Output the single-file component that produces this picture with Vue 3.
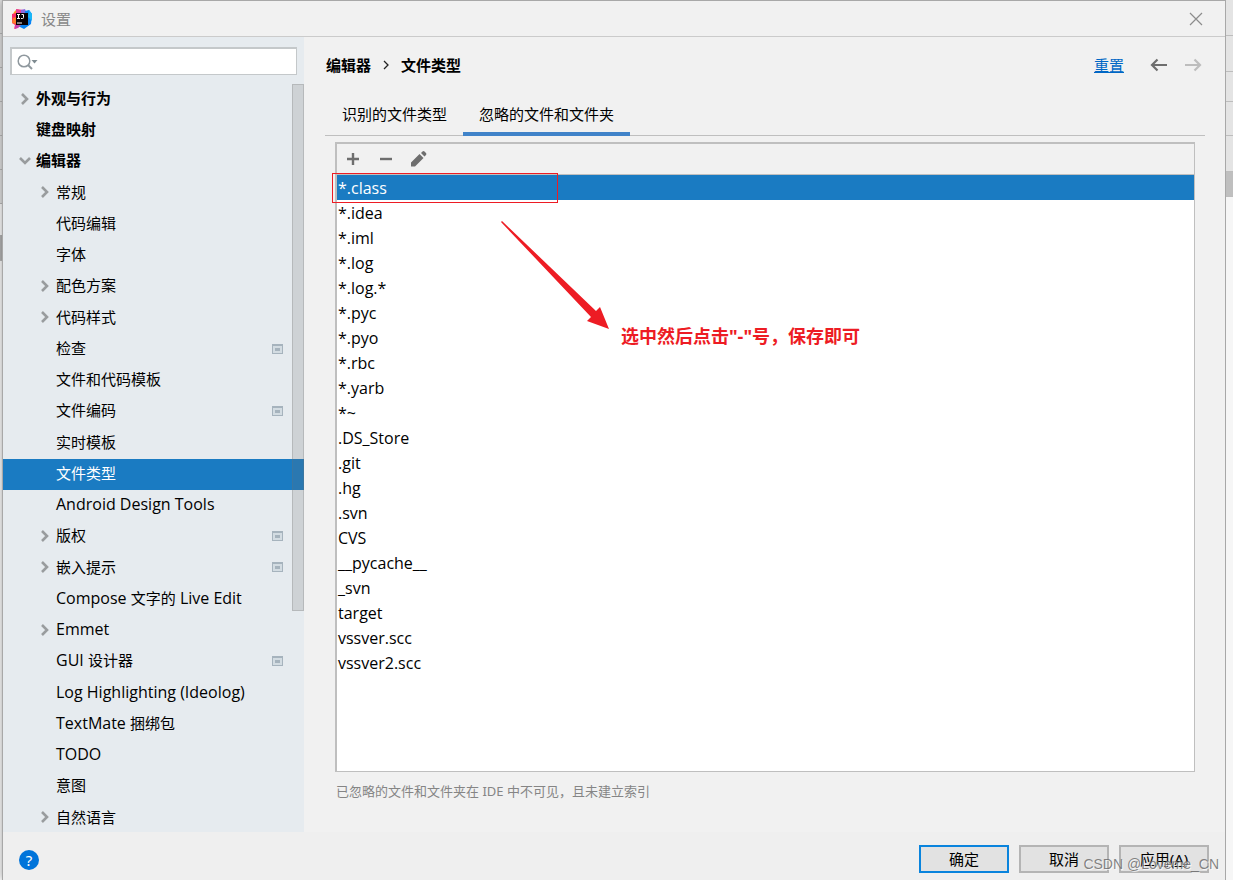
<script setup>
import { ref } from 'vue'

const tree = [
  { text: '外观与行为', level: 0, arrow: 'right', bold: true },
  { text: '键盘映射', level: 0, bold: true },
  { text: '编辑器', level: 0, arrow: 'down', bold: true },
  { text: '常规', level: 1, arrow: 'right' },
  { text: '代码编辑', level: 1 },
  { text: '字体', level: 1 },
  { text: '配色方案', level: 1, arrow: 'right' },
  { text: '代码样式', level: 1, arrow: 'right' },
  { text: '检查', level: 1, project: true },
  { text: '文件和代码模板', level: 1 },
  { text: '文件编码', level: 1, project: true },
  { text: '实时模板', level: 1 },
  { text: '文件类型', level: 1, selected: true },
  { text: 'Android Design Tools', level: 1 },
  { text: '版权', level: 1, arrow: 'right', project: true },
  { text: '嵌入提示', level: 1, arrow: 'right', project: true },
  { text: 'Compose 文字的 Live Edit', level: 1 },
  { text: 'Emmet', level: 1, arrow: 'right' },
  { text: 'GUI 设计器', level: 1, project: true },
  { text: 'Log Highlighting (Ideolog)', level: 1 },
  { text: 'TextMate 捆绑包', level: 1 },
  { text: 'TODO', level: 1 },
  { text: '意图', level: 1 },
  { text: '自然语言', level: 1, arrow: 'right' }
]

// Latin runs are set one size larger than the Chinese text beside them.
const runs = (text) =>
  text.match(/[\x20-\x7e]+|[^\x20-\x7e]+/g).map((part) => ({ part, latin: /^[\x20-\x7e]/.test(part) }))

const patterns = [
  '*.class', '*.idea', '*.iml', '*.log', '*.log.*', '*.pyc', '*.pyo', '*.rbc', '*.yarb', '*~',
  '.DS_Store', '.git', '.hg', '.svn', 'CVS', '__pycache__', '_svn', 'target', 'vssver.scc', 'vssver2.scc'
]
const current = ref(0)
const query = ref('')
</script>

<template>
  <div class="desktop">
    <div class="behind left" aria-hidden="true"><i v-for="n in 7" :key="n"></i></div>
    <main class="dialog">
      <header class="titlebar">
        <svg class="logo" width="20" height="20" viewBox="0 0 20 20" aria-hidden="true">
          <path d="M2 3 5 0 10 2 8 10 2 13 0 8Z" fill="#ff9a1f" />
          <path d="M0 5 4 4 9 8 7 18 2 20 3 16 0 14Z" fill="#fc2f6d" />
          <path d="M1 9 4 8 4 15 0 14Z" fill="#ff7a2a" />
          <path d="M4 0 12 1 11 5 4 5Z" fill="#e8409a" />
          <path d="M9 1 13 0 15 5 9 5Z" fill="#8a6be0" />
          <path d="M13 2 17 1 20 5 19 15 12 20 6 17 14 14Z" fill="#0a84f5" />
          <path d="M17 1 20 5 20 12 16 8Z" fill="#19b6f7" />
          <path d="M3 16h6l-3 3-3 1Z" fill="#c93fae" />
          <rect x="4" y="4" width="12" height="12" fill="#080206" />
          <path d="M5 5.500h3M6.500 5.500v4M5 9.500h3M9.500 5.500h2v3q0 1-1 1h-1.500M5 14h5" fill="none" stroke="#fff" />
        </svg>
        <h1>设置</h1>
        <button class="close" aria-label="关闭">
          <svg width="14" height="14" viewBox="0 0 14 14"><path d="M1 1 13 13M13 1 1 13" stroke="#8c8c8c" stroke-width="1.200" /></svg>
        </button>
      </header>

      <div class="body">
        <aside class="sidebar">
          <label class="search">
            <svg width="22" height="16" viewBox="0 0 22 16" aria-hidden="true">
              <circle cx="7" cy="7" r="5.800" fill="none" stroke="#8f989e" stroke-width="1.500" />
              <path d="m11 11 4 4" stroke="#8f989e" stroke-width="2" />
              <path d="M14.500 6h6l-3 3.500z" fill="#7f8b91" />
            </svg>
            <input v-model="query" type="text" aria-label="搜索设置" />
          </label>
          <div class="tree-wrap">
            <ul class="tree">
              <li v-for="item in tree" :key="item.text" :class="['l' + item.level, { bold: item.bold, selected: item.selected }]">
                <span class="arrow">
                  <svg v-if="item.arrow === 'right'" width="8" height="12" viewBox="0 0 8 12"><path d="m1 1 5 5-5 5" fill="none" stroke="#999c9e" stroke-width="2.600" /></svg>
                  <svg v-else-if="item.arrow === 'down'" width="12" height="8" viewBox="0 0 12 8"><path d="m1 1 5 5 5-5" fill="none" stroke="#999c9e" stroke-width="2.600" /></svg>
                </span>
                <span class="name"><span v-for="(r, k) in runs(item.text)" :key="k" :class="{ latin: r.latin }">{{ r.part }}</span></span>
                <svg v-if="item.project" class="project" width="11" height="10" viewBox="0 0 11 10">
                  <path fill="#a6b3bd" d="M0 0h11v10H0z" /><path fill="#d3dce2" d="M1 2h9v7H1z" /><path fill="#a6b3bd" d="M3 4h5v3H3z" />
                </svg>
              </li>
            </ul>
            <div class="scrollbar"></div>
          </div>
        </aside>

        <section class="content">
          <div class="crumbs">
            <strong>编辑器</strong>
            <svg width="6" height="10" viewBox="0 0 6 10"><path d="m1 1 4 4-4 4" fill="none" stroke="#222" stroke-width="1.300" /></svg>
            <strong>文件类型</strong>
            <a href="#" class="reset">重置</a>
            <button class="nav" aria-label="后退">
              <svg width="18" height="14" viewBox="0 0 18 14"><path d="M17 7H2M7.500 1.500 2 7l5.500 5.500" fill="none" stroke="#6e6e6e" stroke-width="2.200" /></svg>
            </button>
            <button class="nav" aria-label="前进">
              <svg width="18" height="14" viewBox="0 0 18 14"><path d="M1 7h15M10.500 1.500 16 7l-5.500 5.500" fill="none" stroke="#bdbdbd" stroke-width="2.200" /></svg>
            </button>
          </div>

          <div class="tabs" role="tablist">
            <button role="tab" aria-selected="false">识别的文件类型</button>
            <button role="tab" aria-selected="true" class="active">忽略的文件和文件夹</button>
          </div>

          <div class="panel">
            <div class="toolbar">
              <button aria-label="添加"><svg width="18" height="18" viewBox="0 0 18 18"><path d="M9 3v12M3 9h12" stroke="#6e6e6e" stroke-width="2.400" /></svg></button>
              <button aria-label="移除"><svg width="18" height="18" viewBox="0 0 18 18"><path d="M3 9h12" stroke="#6e6e6e" stroke-width="2.400" /></svg></button>
              <button aria-label="编辑"><svg width="18" height="18" viewBox="0 0 18 18"><path d="m1 12.500 8.500-8.500 4 4L5 16.500H1zM11 3l1.500-1.500q1-.8 2 0l1.500 1.500q.8 1 0 2L14.500 6.500z" fill="#6e6e6e" /></svg></button>
            </div>
            <ul class="patterns">
              <li v-for="(p, i) in patterns" :key="p" :class="{ selected: i === current }" @click="current = i">{{ p }}</li>
            </ul>
            <div class="frame"></div>
            <svg class="pointer" width="110" height="110" viewBox="0 0 110 110" aria-hidden="true">
              <path d="M1 2 2 1 96 91 100 87 109 109 87 101 91 97Z" fill="#ed1c24" />
            </svg>
            <p class="note">选中然后点击"-"号，保存即可</p>
          </div>
          <p class="hint">已忽略的文件和文件夹在 IDE 中不可见，且未建立索引</p>
        </section>
      </div>

      <footer class="footer">
        <button class="help" aria-label="帮助">?</button>
        <div class="actions">
          <button class="primary">确定</button>
          <button>取消</button>
          <button>应用(<u>A</u>)</button>
        </div>
        <span class="watermark">CSDN @Loveme_CN</span>
      </footer>
    </main>
    <div class="behind right" aria-hidden="true"><i v-for="n in 7" :key="n"></i></div>
  </div>
</template>

<style>
body { margin: 0; }
</style>

<style scoped>
* { box-sizing: border-box; }
.desktop {
  display: grid;
  grid-template-columns: 2px 1fr 7px;
  grid-template-rows: 100%;
  height: 100vh;
  overflow: hidden;
  background: #fff;
  color: #000;
  font: 15px/20px "Noto Sans", "Noto Sans CJK SC", sans-serif;
}
button { font: inherit; color: inherit; border: 0; padding: 0; background: none; }
ul, p, h1 { margin: 0; padding: 0; list-style: none; }
svg { display: block; flex: none; }

.behind { display: flex; flex-direction: column; }
.behind i { flex: none; border-bottom: 1px solid #bdbdbd; background: #e4e4e4; }
.right i { height: 34px; }
.right i:nth-child(1) { height: 36px; }
.right i:nth-child(2) { height: 36px; }
.right i:nth-child(3) { height: 30px; }
.right i:nth-child(5) { height: 36px; }
.right i:nth-child(6) { height: 25px; background: #bfbfbf; }
.right i:nth-child(7) { flex: 1; border: 0; background: #f6f6f6; }
.left i { height: 34px; }
.left i:nth-child(7) { height: 26px; margin-top: 31px; background: #b8b8b8; }

.dialog {
  display: flex;
  flex-direction: column;
  min-width: 0;
  border: 1px solid #a8a8a8;
  border-bottom: 0;
  background: #f1f1f1;
  box-shadow: 0 0 8px rgba(0, 0, 0, .4);
}
.titlebar {
  display: flex;
  align-items: center;
  height: 36px;
  flex: none;
  padding: 0 22px 0 9px;
  border-bottom: 1px solid #cbcbcb;
}
.titlebar h1 { margin-left: 9px; flex: 1; font-size: 15px; font-weight: 400; color: #888; }
.body { display: flex; flex: 1; min-height: 0; }

.sidebar { display: flex; flex-direction: column; width: 301px; flex: none; background: #e6ebef; }
.search {
  display: flex;
  align-items: center;
  height: 28px;
  margin: 10px 7px 9px;
  padding-left: 5px;
  border: 2px solid #c4c8ca;
  border-right-width: 1px;
  border-bottom-width: 1px;
  background: #fff;
}
.search input { flex: 1; min-width: 0; border: 0; outline: 0; font: inherit; background: none; }
.tree-wrap { position: relative; flex: 1; min-height: 0; overflow: hidden; }
.tree li { display: flex; align-items: center; height: 31px; padding: 0 21px 2px 14px; }
.tree li:nth-child(4n) { height: 32px; }
.tree li.l1 { padding-left: 34px; }
.arrow { display: flex; justify-content: center; width: 16px; margin-right: 3px; flex: none; }
.name { flex: 1; height: 20px; margin-top: -1px; white-space: pre; }
.latin { font-family: "Open Sans", "Noto Sans", sans-serif; font-size: 16px; }
.bold { font-weight: 700; }
.selected { background: #1a7bc2; color: #fff; }
.scrollbar {
  position: absolute;
  top: 0;
  right: 0;
  width: 12px;
  height: 527px;
  border: 1px solid rgba(110, 110, 110, .25);
  background: rgba(110, 110, 110, .2);
}

.content { display: flex; flex-direction: column; flex: 1; min-width: 0; padding: 16px 20px 0 21px; }
.crumbs { display: flex; align-items: center; height: 24px; gap: 12px; padding: 0 3px 0 1px; }
.reset { margin-left: auto; color: #0067c5; text-decoration: underline; }
.nav { margin-left: 4px; }
.reset + .nav { margin-left: 14px; }
.tabs { display: flex; height: 59px; padding-left: 1px; border-bottom: 1px solid #bfbfbf; align-items: flex-end; }
.tabs button { height: 41px; padding: 0 16px; margin-bottom: -1px; border-bottom: 4px solid transparent; }
.tabs .active { border-color: #4083c9; }
.panel {
  position: relative;
  display: flex;
  flex-direction: column;
  flex: 1;
  min-height: 0;
  margin: 6px 10px 0;
  border: 1px solid #bfbfbf;
  border-width: 2px 1px 1px 2px;
  background: #fff;
}
.toolbar { display: flex; align-items: center; gap: 15px; height: 31px; padding-left: 7px; border-bottom: 1px solid #bfbfbf; background: #f1f1f1; }
.patterns { font-family: "Open Sans", "Noto Sans", sans-serif; font-size: 16px; }
.patterns li { height: 25px; padding: 2px 1px; line-height: 22px; }
.frame { position: absolute; top: 29px; left: -5px; width: 226px; height: 30px; border: 1px solid #ed1c24; }
.pointer { position: absolute; top: 76px; left: 163px; }
.note { position: absolute; top: 178px; left: 284px; font-size: 18px; line-height: 28px; font-weight: 700; color: #ed1c24; white-space: nowrap; }
.hint { height: 60px; padding: 9px 11px; font-size: 13px; color: #858585; }

.footer { position: relative; display: flex; flex: none; align-items: flex-start; justify-content: space-between; height: 48px; padding: 13px 16px 0; background: #efefef; }
.help { width: 20px; height: 20px; margin-top: 5px; border-radius: 50%; background: #0074da; color: #fff; font-size: 15px; line-height: 20px; }
.actions { display: flex; gap: 10px; }
.actions button { width: 90px; height: 28px; border: 2px solid #b4b4b4; background: #e2e2e2; line-height: 22px; }
.actions .primary { border-color: #0a84dd; }
.watermark { position: absolute; right: 6px; bottom: 6px; font: 14px/20px "Liberation Sans", sans-serif; color: rgba(110, 110, 110, .85); text-shadow: 1px 1px 0 rgba(255, 255, 255, .7); }
</style>
